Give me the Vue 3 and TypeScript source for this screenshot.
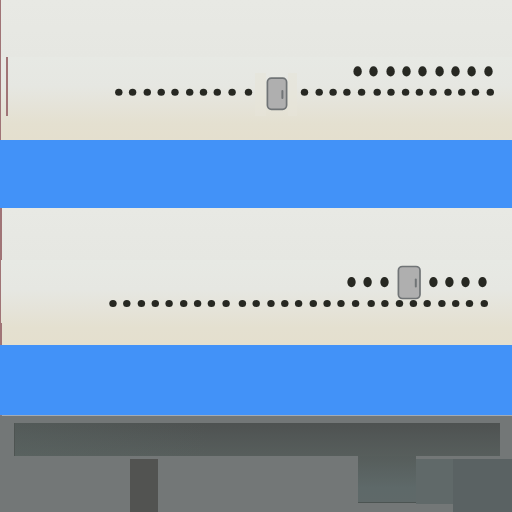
<script setup lang="ts">
interface Box {
  x: number
  y: number
  w: number
  h: number
}

interface Panel {
  id: string
  height: number
  seam: number
  small: { y: number; xs: number[] }
  large: { y: number; xs: number[] }
  door: Box
  edges: Box[]
  patches: Box[]
}

const upper: Panel = {
  id: 'upper',
  height: 140,
  seam: 57,
  small: {
    y: 92.3,
    xs: [118.8, 132.6, 147.3, 161.2, 175, 189.7, 203.5, 217.3, 232.1, 248.5,
      304.5, 319.2, 333.1, 346.9, 361.6, 377.2, 391, 405.6, 419.4, 433.1, 448, 461.7, 475.5, 490.3],
  },
  large: { y: 71.4, xs: [357.6, 373.5, 390.6, 406.5, 422.5, 439.6, 455.5, 471.6, 488.5] },
  door: { x: 267.4, y: 78.1, w: 19.2, h: 31.2 },
  edges: [
    { x: 0, y: 0, w: 1, h: 140 },
    { x: 6, y: 57, w: 2, h: 59 },
  ],
  patches: [
    { x: 255, y: 73, w: 11, h: 43 },
    { x: 288, y: 73, w: 9, h: 43 },
  ],
}

const lower: Panel = {
  id: 'lower',
  height: 137,
  seam: 52,
  small: {
    y: 95.5,
    xs: [113, 126.8, 141.4, 155.3, 169.1, 183.7, 197.6, 211.4, 226.1, 242.4,
      256.2, 271, 284.8, 298.6, 313.3, 327.1, 341, 355.6, 371.2, 384.9, 399.5, 413.4,
      427.2, 441.9, 455.7, 469.5, 484.3],
  },
  large: { y: 74.1, xs: [351.5, 367.6, 384.5, 433.4, 449.4, 465.5, 482.5] },
  door: { x: 398.4, y: 58.5, w: 21.6, h: 32 },
  edges: [
    { x: 0, y: 0, w: 2, h: 52 },
    { x: 0, y: 52, w: 1, h: 63 },
    { x: 0, y: 115, w: 2, h: 22 },
  ],
  patches: [],
}

const panels: Panel[] = [upper, lower]
</script>

<template>
  <main class="page">
    <template v-for="p in panels" :key="p.id">
      <svg class="panel" :viewBox="`0 0 512 ${p.height}`" aria-hidden="true">
        <defs>
          <linearGradient :id="`top-${p.id}`" x1="0" y1="0" x2="0" y2="1">
            <stop offset="0" stop-color="#e8e9e4" />
            <stop offset="1" stop-color="#e6e7e2" />
          </linearGradient>
          <linearGradient :id="`base-${p.id}`" x1="0" y1="0" x2="0" y2="1">
            <stop offset="0" stop-color="#e7e9e4" />
            <stop offset="0.35" stop-color="#e6e7e2" />
            <stop offset="0.6" stop-color="#e5e3d8" />
            <stop offset="0.8" stop-color="#e4e0d0" />
            <stop offset="1" stop-color="#e4dfce" />
          </linearGradient>
        </defs>
        <rect width="512" :height="p.seam" :fill="`url(#top-${p.id})`" />
        <rect :y="p.seam" width="512" :height="p.height - p.seam" :fill="`url(#base-${p.id})`" />
        <rect
          v-for="(r, i) in p.patches" :key="`patch${i}`" class="patch"
          :x="r.x" :y="r.y" :width="r.w" :height="r.h"
        />
        <rect
          v-for="(r, i) in p.edges" :key="`edge${i}`" class="edge"
          :x="r.x" :y="r.y" :width="r.w" :height="r.h"
        />
        <ellipse
          v-for="x in p.small.xs" :key="`s${x}`" class="window"
          :cx="x" :cy="p.small.y" rx="3.7" ry="3.5"
        />
        <ellipse
          v-for="x in p.large.xs" :key="`l${x}`" class="window"
          :cx="x" :cy="p.large.y" rx="4.2" ry="5.1"
        />
        <rect
          class="door" :x="p.door.x" :y="p.door.y"
          :width="p.door.w" :height="p.door.h" rx="4"
        />
        <rect
          class="handle" :x="p.door.x + p.door.w - 5.2" :y="p.door.y + 12"
          width="2" height="9" rx="1"
        />
      </svg>
      <div class="band" :class="p.id"></div>
    </template>
    <svg class="ground" viewBox="0 0 512 97" aria-hidden="true">
      <defs>
        <linearGradient id="beam" x1="0" y1="0" x2="0" y2="1">
          <stop offset="0" stop-color="#4e5251" />
          <stop offset="0.4" stop-color="#525756" />
          <stop offset="1" stop-color="#575e5c" />
        </linearGradient>
        <linearGradient id="beam-tint" x1="0" y1="0" x2="1" y2="0">
          <stop offset="0" stop-color="#5c6966" stop-opacity="0.35" />
          <stop offset="0.4" stop-color="#5c6966" stop-opacity="0" />
        </linearGradient>
        <linearGradient id="leg" x1="0" y1="0" x2="0" y2="1">
          <stop offset="0" stop-color="#565d5b" />
          <stop offset="0.7" stop-color="#5e6969" />
          <stop offset="1" stop-color="#5f6969" />
        </linearGradient>
      </defs>
      <rect width="512" height="97" fill="#737777" />
      <rect width="2" height="1" fill="#85787f" />
      <rect x="2" width="510" height="1" fill="#a2abb5" />
      <rect x="14" y="8" width="486" height="33" fill="url(#beam)" />
      <rect x="14" y="8" width="486" height="33" fill="url(#beam-tint)" />
      <rect x="14" y="8" width="1" height="33" fill="#4e5452" />
      <rect x="358" y="41" width="58" height="46" fill="url(#leg)" />
      <rect x="358" y="87" width="58" height="1" fill="#4c5452" />
      <rect x="416" y="44" width="37" height="45" fill="#606969" />
      <rect x="453" y="44" width="59" height="53" fill="#5a6263" />
      <rect x="130" y="44" width="28" height="53" fill="#525351" />
    </svg>
  </main>
</template>

<style>
body {
  margin: 0;
  background: #737777;
}
</style>

<style scoped>
.page {
  display: flex;
  flex-direction: column;
}

.panel,
.ground {
  display: block;
  width: 100%;
  height: auto;
}

.band {
  background: #4292f8;
}

.band.upper {
  height: 68px;
}

.band.lower {
  height: 70px;
}

.patch {
  fill: #e6e4d8;
  opacity: 0.6;
}

.edge {
  fill: #a07476;
}

.window {
  fill: #272822;
}

.door {
  fill: #afafaf;
  stroke: #707476;
  stroke-width: 1.7;
}

.handle {
  fill: #707476;
}
</style>
